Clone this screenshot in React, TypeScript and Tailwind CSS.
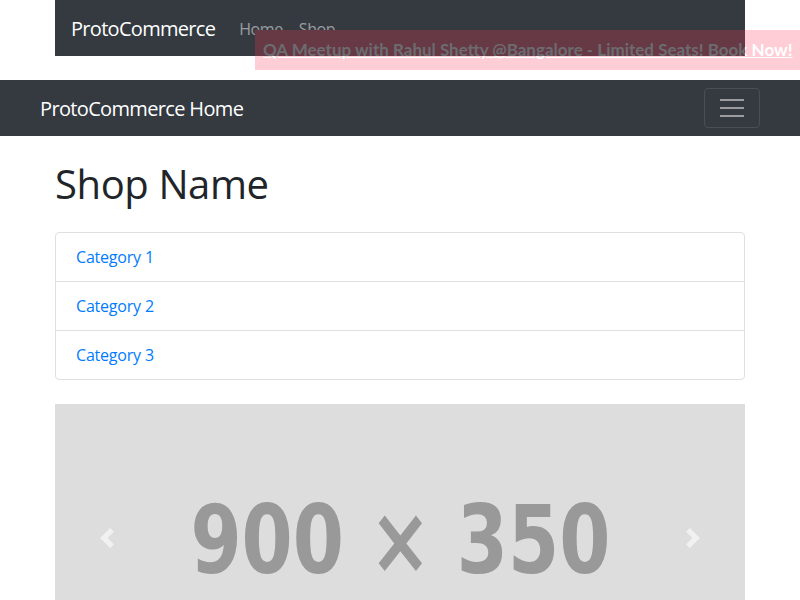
const font = { fontFamily: '"Open Sans", "Noto Sans", sans-serif' };

const BANNER = "QA Meetup with Rahul Shetty @Bangalore - Limited Seats! Book Now!";
const bannerFont = { fontFamily: 'Lato, "Open Sans", sans-serif' };

const Banner = () => (
  <div className="absolute left-[255px] top-[30px] w-[545px] h-[40px] bg-[#ffcdd6]" style={bannerFont}>
    <a href="#" className="block pl-[8px] pt-[8px] text-[17px] font-bold leading-[24px] text-white underline whitespace-nowrap">
      {BANNER}
    </a>
    {/* part that sits over the dark top bar */}
    <div className="absolute left-0 top-0 w-[490px] h-[26px] overflow-hidden bg-[#673945]">
      <span className="block pl-[8px] pt-[8px] text-[17px] font-bold leading-[24px] text-[#6c6c70] whitespace-nowrap">
        {BANNER}
      </span>
    </div>
  </div>
);

const Chevron = ({ dir }: { dir: "left" | "right" }) => (
  <svg width="20" height="20" viewBox="0 0 8 8" fill="#fff" className="opacity-60">
    {dir === "left" ? (
      <path d="M5.25 0l-4 4 4 4 1.5-1.5-2.5-2.5 2.5-2.5-1.5-1.5z" />
    ) : (
      <path d="M2.75 0l-1.5 1.5 2.5 2.5-2.5 2.5 1.5 1.5 4-4-4-4z" />
    )}
  </svg>
);

export default function App() {
  return (
    <div className="relative h-[600px] overflow-hidden bg-white text-[#212529]" style={font}>
      {/* top bar */}
      <div className="w-[690px] mx-auto h-[56px] bg-[#343a40] flex items-center px-4 pt-[2px]">
        <span className="text-[20px] text-white mr-4 tracking-[-0.7px]">ProtoCommerce</span>
        <nav className="flex text-[16px] text-[#ffffff80] tracking-[-0.4px]">
          <a href="#" className="px-2">Home</a>
          <a href="#" className="px-2">Shop</a>
        </nav>
      </div>
      <Banner />

      {/* main nav */}
      <div className="mt-[24px] h-[56px] bg-[#343a40] flex items-center justify-between px-[40px]">
        <span className="text-[20px] text-white tracking-[-0.65px] pt-[2px]">ProtoCommerce Home</span>
        <button className="w-[56px] h-[40px] rounded border border-[#ffffff1a] flex flex-col items-center justify-center gap-[6px]">
          <span className="block w-[24px] h-[2px] bg-[#9a9c9f]" />
          <span className="block w-[24px] h-[2px] bg-[#9a9c9f]" />
          <span className="block w-[24px] h-[2px] bg-[#9a9c9f]" />
        </button>
      </div>

      <main className="w-[690px] mx-auto">
        <h1 className="my-6 text-[40px] leading-[48px] font-medium tracking-[-0.4px]">Shop Name</h1>

        <div className="border border-[#dfdfdf] rounded mb-6">
          {["Category 1", "Category 2", "Category 3"].map((c, i) => (
            <a
              key={c}
              href="#"
              className={`block px-5 py-3 leading-[24px] text-[16px] text-[#007bff] tracking-[-0.2px] ${i > 0 ? "border-t border-[#dfdfdf]" : ""}`}
            >
              {c}
            </a>
          ))}
        </div>

        <div className="h-[268px] bg-[#dddddd] flex items-center">
          <div className="w-[104px] flex justify-center"><Chevron dir="left" /></div>
          <div className="flex-1 flex justify-center pt-[6px]">
            <span
              className="inline-block text-[#999999] text-[94px] leading-none font-bold scale-x-[0.87] whitespace-nowrap"
              style={{ fontFamily: '"DejaVu Sans Condensed", "DejaVu Sans", sans-serif' }}
            >
              900 × 350
            </span>
          </div>
          <div className="w-[104px] flex justify-center"><Chevron dir="right" /></div>
        </div>
      </main>
    </div>
  );
}
